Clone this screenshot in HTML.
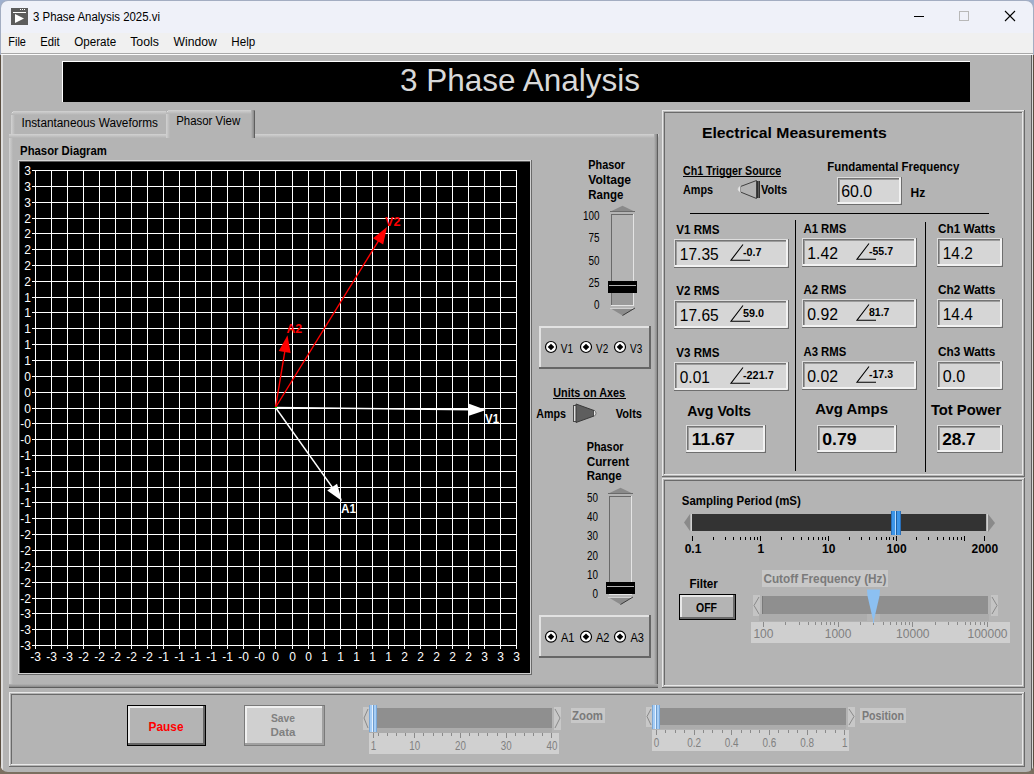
<!DOCTYPE html><html><head><meta charset="utf-8"><style>html,body{margin:0;padding:0;overflow:hidden;background:#7b6f60}svg{display:block}text{font-family:"Liberation Sans",sans-serif}</style></head><body>
<svg width="1034" height="774" viewBox="0 0 1034 774" shape-rendering="crispEdges">
<rect x="0" y="0" width="1034" height="774" fill="#7b6f60" />
<rect x="0" y="0" width="1034" height="12" fill="#9fb0cf" />
<rect x="0" y="0" width="1034" height="772" rx="8" ry="8" fill="#a3adc2" shape-rendering="geometricPrecision"/>
<rect x="1" y="1" width="1032" height="770" rx="7" ry="7" fill="#eff1f9" shape-rendering="geometricPrecision"/>
<rect x="1" y="33" width="1032" height="20" fill="#f0f0f0" />
<rect x="1" y="53" width="1032" height="1" fill="#a8a8a8" />
<rect x="1" y="54" width="1032" height="1" fill="#fcfcfc" />
<rect x="1" y="55" width="1032" height="717" fill="#b4b4b4" />
<rect x="0" y="55" width="1" height="717" fill="#5a4e40" />
<rect x="1" y="55" width="2" height="717" fill="#dedede" />
<rect x="1031" y="55" width="1" height="717" fill="#5e5e5e" />
<rect x="1032" y="55" width="1" height="717" fill="#d8d8d8" />
<rect x="1033" y="55" width="1" height="717" fill="#5a4e40" />
<rect x="0" y="772" width="1034" height="2" fill="#7b6f60" />
<path d="M0 764 A8 8 0 0 0 8 772 L0 772 Z" fill="#7b6f60" shape-rendering="geometricPrecision"/>
<path d="M1034 764 A8 8 0 0 1 1026 772 L1034 772 Z" fill="#7b6f60" shape-rendering="geometricPrecision"/>
<rect x="11" y="8" width="17" height="17" fill="#5c5c5c" />
<rect x="13" y="12" width="13" height="1" fill="#ffffff" />
<rect x="20" y="9" width="1" height="1" fill="#ffffff" />
<rect x="22" y="9" width="1" height="1" fill="#ffffff" />
<rect x="24" y="9" width="1" height="1" fill="#ffffff" />
<path d="M15 14 L15 23 L24 18.5 Z" fill="#ffffff" stroke="none" stroke-width="1" shape-rendering="geometricPrecision"/>
<text x="33" y="21" font-size="12.5" fill="#000" textLength="127" lengthAdjust="spacingAndGlyphs" >3 Phase Analysis 2025.vi</text>
<rect x="914" y="16" width="10" height="1" fill="#000" />
<rect x="959.5" y="11.5" width="9" height="9" rx="1" fill="none" stroke="#b8b8b8" stroke-width="1"/>
<path d="M1005 11 L1015 21 M1015 11 L1005 21" fill="none" stroke="#000" stroke-width="1.1" shape-rendering="geometricPrecision"/>
<text x="8.3" y="46" font-size="12.5" fill="#000" textLength="17.6" lengthAdjust="spacingAndGlyphs" >File</text>
<text x="40.2" y="46" font-size="12.5" fill="#000" textLength="19.4" lengthAdjust="spacingAndGlyphs" >Edit</text>
<text x="74.2" y="46" font-size="12.5" fill="#000" textLength="42.0" lengthAdjust="spacingAndGlyphs" >Operate</text>
<text x="130.2" y="46" font-size="12.5" fill="#000" textLength="28.7" lengthAdjust="spacingAndGlyphs" >Tools</text>
<text x="173.5" y="46" font-size="12.5" fill="#000" textLength="43.2" lengthAdjust="spacingAndGlyphs" >Window</text>
<text x="231.3" y="46" font-size="12.5" fill="#000" textLength="23.9" lengthAdjust="spacingAndGlyphs" >Help</text>
<rect x="62" y="61" width="908" height="1" fill="#ffffff" />
<rect x="62" y="61" width="1" height="41" fill="#ffffff" />
<rect x="63" y="62" width="907" height="40" fill="#000000" />
<text x="400" y="90.7" font-size="31.5" fill="#d9d9d9" textLength="240" lengthAdjust="spacingAndGlyphs" shape-rendering="geometricPrecision">3 Phase Analysis</text>
<defs>
<linearGradient id="gL" x1="0" x2="1" y1="0" y2="0"><stop offset="0" stop-color="#d2d2d2"/><stop offset="1" stop-color="#b4b4b4"/></linearGradient>
<linearGradient id="gT" x1="0" x2="0" y1="0" y2="1"><stop offset="0" stop-color="#d2d2d2"/><stop offset="1" stop-color="#b4b4b4"/></linearGradient>
<linearGradient id="gR" x1="0" x2="1" y1="0" y2="0"><stop offset="0" stop-color="#b4b4b4"/><stop offset="1" stop-color="#7a7a7a"/></linearGradient>
<linearGradient id="gB" x1="0" x2="0" y1="0" y2="1"><stop offset="0" stop-color="#b4b4b4"/><stop offset="1" stop-color="#7a7a7a"/></linearGradient>
</defs>
<rect x="11" y="111" width="156" height="24" fill="#b4b4b4" />
<rect x="11" y="111" width="4" height="24" fill="url(#gL)" />
<rect x="11" y="111" width="156" height="4" fill="url(#gT)" />
<rect x="11" y="111" width="2" height="2" fill="#b4b4b4" />
<rect x="12" y="112" width="1" height="1" fill="#e0e0e0" />
<text x="21.4" y="126.8" font-size="12.5" fill="#000" textLength="136.5" lengthAdjust="spacingAndGlyphs" >Instantaneous Waveforms</text>
<rect x="9" y="134" width="650" height="554" fill="#b4b4b4" />
<rect x="9" y="134" width="4" height="554" fill="url(#gL)" />
<rect x="9" y="134" width="650" height="4" fill="url(#gT)" />
<rect x="654" y="134" width="4" height="554" fill="url(#gR)" />
<rect x="657" y="134" width="1" height="554" fill="#5e5e5e" />
<rect x="9" y="684" width="649" height="4" fill="url(#gB)" />
<rect x="9" y="687" width="649" height="1" fill="#5e5e5e" />
<rect x="166" y="110" width="89" height="28" fill="#b4b4b4" />
<rect x="166" y="110" width="4" height="28" fill="url(#gL)" />
<rect x="166" y="110" width="89" height="4" fill="url(#gT)" />
<rect x="166" y="110" width="2" height="2" fill="#b4b4b4" />
<rect x="167" y="111" width="1" height="1" fill="#e0e0e0" />
<rect x="251" y="110" width="4" height="28" fill="url(#gR)" />
<rect x="254" y="111" width="1" height="27" fill="#5e5e5e" />
<text x="176.2" y="125" font-size="12.5" fill="#000" textLength="64" lengthAdjust="spacingAndGlyphs" >Phasor View</text>
<text x="20.1" y="154.8" font-size="12" fill="#000" font-weight="bold" textLength="86.8" lengthAdjust="spacingAndGlyphs" >Phasor Diagram</text>
<rect x="18" y="160" width="514" height="515" fill="#000" />
<rect x="18" y="160" width="514" height="1" fill="#d8d8d8" />
<rect x="18" y="160" width="1" height="515" fill="#d8d8d8" />
<rect x="19" y="161" width="512" height="1" fill="#5a5a5a" />
<rect x="19" y="161" width="1" height="513" fill="#5a5a5a" />
<rect x="530" y="161" width="1" height="513" fill="#d0d0d0" />
<rect x="19" y="673" width="512" height="1" fill="#d0d0d0" />
<rect x="531" y="160" width="1" height="515" fill="#6a6a6a" />
<rect x="18" y="674" width="514" height="1" fill="#6a6a6a" />
<g fill="#ffffff">
<rect x="35" y="170" width="1" height="479" fill="#ffffff" />
<rect x="51" y="170" width="1" height="479" fill="#ffffff" />
<rect x="67" y="170" width="1" height="479" fill="#ffffff" />
<rect x="83" y="170" width="1" height="479" fill="#ffffff" />
<rect x="99" y="170" width="1" height="479" fill="#ffffff" />
<rect x="115" y="170" width="1" height="479" fill="#ffffff" />
<rect x="131" y="170" width="1" height="479" fill="#ffffff" />
<rect x="147" y="170" width="1" height="479" fill="#ffffff" />
<rect x="163" y="170" width="1" height="479" fill="#ffffff" />
<rect x="179" y="170" width="1" height="479" fill="#ffffff" />
<rect x="195" y="170" width="1" height="479" fill="#ffffff" />
<rect x="211" y="170" width="1" height="479" fill="#ffffff" />
<rect x="227" y="170" width="1" height="479" fill="#ffffff" />
<rect x="243" y="170" width="1" height="479" fill="#ffffff" />
<rect x="259" y="170" width="1" height="479" fill="#ffffff" />
<rect x="275" y="170" width="1" height="479" fill="#ffffff" />
<rect x="292" y="170" width="1" height="479" fill="#ffffff" />
<rect x="308" y="170" width="1" height="479" fill="#ffffff" />
<rect x="324" y="170" width="1" height="479" fill="#ffffff" />
<rect x="340" y="170" width="1" height="479" fill="#ffffff" />
<rect x="356" y="170" width="1" height="479" fill="#ffffff" />
<rect x="372" y="170" width="1" height="479" fill="#ffffff" />
<rect x="388" y="170" width="1" height="479" fill="#ffffff" />
<rect x="404" y="170" width="1" height="479" fill="#ffffff" />
<rect x="420" y="170" width="1" height="479" fill="#ffffff" />
<rect x="436" y="170" width="1" height="479" fill="#ffffff" />
<rect x="452" y="170" width="1" height="479" fill="#ffffff" />
<rect x="468" y="170" width="1" height="479" fill="#ffffff" />
<rect x="484" y="170" width="1" height="479" fill="#ffffff" />
<rect x="500" y="170" width="1" height="479" fill="#ffffff" />
<rect x="516" y="170" width="1" height="479" fill="#ffffff" />
<rect x="32" y="170" width="485" height="1" fill="#ffffff" />
<rect x="32" y="186" width="485" height="1" fill="#ffffff" />
<rect x="32" y="202" width="485" height="1" fill="#ffffff" />
<rect x="32" y="218" width="485" height="1" fill="#ffffff" />
<rect x="32" y="233" width="485" height="1" fill="#ffffff" />
<rect x="32" y="249" width="485" height="1" fill="#ffffff" />
<rect x="32" y="265" width="485" height="1" fill="#ffffff" />
<rect x="32" y="281" width="485" height="1" fill="#ffffff" />
<rect x="32" y="297" width="485" height="1" fill="#ffffff" />
<rect x="32" y="312" width="485" height="1" fill="#ffffff" />
<rect x="32" y="328" width="485" height="1" fill="#ffffff" />
<rect x="32" y="344" width="485" height="1" fill="#ffffff" />
<rect x="32" y="360" width="485" height="1" fill="#ffffff" />
<rect x="32" y="376" width="485" height="1" fill="#ffffff" />
<rect x="32" y="392" width="485" height="1" fill="#ffffff" />
<rect x="32" y="408" width="485" height="1" fill="#ffffff" />
<rect x="32" y="423" width="485" height="1" fill="#ffffff" />
<rect x="32" y="439" width="485" height="1" fill="#ffffff" />
<rect x="32" y="455" width="485" height="1" fill="#ffffff" />
<rect x="32" y="471" width="485" height="1" fill="#ffffff" />
<rect x="32" y="487" width="485" height="1" fill="#ffffff" />
<rect x="32" y="502" width="485" height="1" fill="#ffffff" />
<rect x="32" y="518" width="485" height="1" fill="#ffffff" />
<rect x="32" y="534" width="485" height="1" fill="#ffffff" />
<rect x="32" y="550" width="485" height="1" fill="#ffffff" />
<rect x="32" y="566" width="485" height="1" fill="#ffffff" />
<rect x="32" y="582" width="485" height="1" fill="#ffffff" />
<rect x="32" y="598" width="485" height="1" fill="#ffffff" />
<rect x="32" y="613" width="485" height="1" fill="#ffffff" />
<rect x="32" y="629" width="485" height="1" fill="#ffffff" />
<rect x="32" y="645" width="485" height="1" fill="#ffffff" />
</g>
<g font-size="12" fill="#ffffff">
<text x="35.5" y="660.5" text-anchor="middle">-3</text>
<text x="51.5" y="660.5" text-anchor="middle">-3</text>
<text x="67.5" y="660.5" text-anchor="middle">-3</text>
<text x="83.5" y="660.5" text-anchor="middle">-2</text>
<text x="99.5" y="660.5" text-anchor="middle">-2</text>
<text x="115.5" y="660.5" text-anchor="middle">-2</text>
<text x="131.5" y="660.5" text-anchor="middle">-2</text>
<text x="147.5" y="660.5" text-anchor="middle">-2</text>
<text x="163.5" y="660.5" text-anchor="middle">-1</text>
<text x="179.5" y="660.5" text-anchor="middle">-1</text>
<text x="195.5" y="660.5" text-anchor="middle">-1</text>
<text x="211.5" y="660.5" text-anchor="middle">-1</text>
<text x="227.5" y="660.5" text-anchor="middle">-1</text>
<text x="243.5" y="660.5" text-anchor="middle">-0</text>
<text x="259.5" y="660.5" text-anchor="middle">-0</text>
<text x="275.5" y="660.5" text-anchor="middle">0</text>
<text x="292.5" y="660.5" text-anchor="middle">0</text>
<text x="308.5" y="660.5" text-anchor="middle">0</text>
<text x="324.5" y="660.5" text-anchor="middle">1</text>
<text x="340.5" y="660.5" text-anchor="middle">1</text>
<text x="356.5" y="660.5" text-anchor="middle">1</text>
<text x="372.5" y="660.5" text-anchor="middle">1</text>
<text x="388.5" y="660.5" text-anchor="middle">1</text>
<text x="404.5" y="660.5" text-anchor="middle">2</text>
<text x="420.5" y="660.5" text-anchor="middle">2</text>
<text x="436.5" y="660.5" text-anchor="middle">2</text>
<text x="452.5" y="660.5" text-anchor="middle">2</text>
<text x="468.5" y="660.5" text-anchor="middle">2</text>
<text x="484.5" y="660.5" text-anchor="middle">3</text>
<text x="500.5" y="660.5" text-anchor="middle">3</text>
<text x="516.5" y="660.5" text-anchor="middle">3</text>
<text x="31" y="174.8" text-anchor="end">3</text>
<text x="31" y="190.8" text-anchor="end">3</text>
<text x="31" y="206.8" text-anchor="end">3</text>
<text x="31" y="222.8" text-anchor="end">2</text>
<text x="31" y="237.8" text-anchor="end">2</text>
<text x="31" y="253.8" text-anchor="end">2</text>
<text x="31" y="269.8" text-anchor="end">2</text>
<text x="31" y="285.8" text-anchor="end">2</text>
<text x="31" y="301.8" text-anchor="end">1</text>
<text x="31" y="316.8" text-anchor="end">1</text>
<text x="31" y="332.8" text-anchor="end">1</text>
<text x="31" y="348.8" text-anchor="end">1</text>
<text x="31" y="364.8" text-anchor="end">1</text>
<text x="31" y="380.8" text-anchor="end">0</text>
<text x="31" y="396.8" text-anchor="end">0</text>
<text x="31" y="412.8" text-anchor="end">0</text>
<text x="31" y="427.8" text-anchor="end">-0</text>
<text x="31" y="443.8" text-anchor="end">-0</text>
<text x="31" y="459.8" text-anchor="end">-1</text>
<text x="31" y="475.8" text-anchor="end">-1</text>
<text x="31" y="491.8" text-anchor="end">-1</text>
<text x="31" y="506.8" text-anchor="end">-1</text>
<text x="31" y="522.8" text-anchor="end">-1</text>
<text x="31" y="538.8" text-anchor="end">-2</text>
<text x="31" y="554.8" text-anchor="end">-2</text>
<text x="31" y="570.8" text-anchor="end">-2</text>
<text x="31" y="586.8" text-anchor="end">-2</text>
<text x="31" y="602.8" text-anchor="end">-2</text>
<text x="31" y="617.8" text-anchor="end">-3</text>
<text x="31" y="633.8" text-anchor="end">-3</text>
<text x="31" y="649.8" text-anchor="end">-3</text>
</g>
<line x1="275.5" y1="407.5" x2="471.00" y2="409.82" stroke="#ffffff" stroke-width="1.4" shape-rendering="geometricPrecision"/>
<path d="M486.00 410.00 L468.93 415.80 L469.07 403.80 Z" fill="#ffffff" shape-rendering="geometricPrecision"/>
<line x1="275.5" y1="407.5" x2="333.31" y2="488.78" stroke="#ffffff" stroke-width="1.4" shape-rendering="geometricPrecision"/>
<path d="M342.00 501.00 L327.26 490.62 L337.04 483.67 Z" fill="#ffffff" shape-rendering="geometricPrecision"/>
<line x1="275.5" y1="407.5" x2="379.12" y2="239.76" stroke="#ff0000" stroke-width="1.4" shape-rendering="geometricPrecision"/>
<path d="M387.00 227.00 L383.17 244.62 L372.96 238.31 Z" fill="#ff0000" shape-rendering="geometricPrecision"/>
<line x1="275.5" y1="407.5" x2="285.04" y2="350.10" stroke="#ff0000" stroke-width="1.4" shape-rendering="geometricPrecision"/>
<path d="M287.50 335.30 L290.63 353.05 L278.79 351.09 Z" fill="#ff0000" shape-rendering="geometricPrecision"/>
<rect x="275" y="407" width="2" height="1" fill="#00ff00" />
<text x="485" y="423" font-size="13" fill="#ffffff" font-weight="bold" textLength="14" lengthAdjust="spacingAndGlyphs" >V1</text>
<text x="341" y="513" font-size="13" fill="#ffffff" font-weight="bold" textLength="15" lengthAdjust="spacingAndGlyphs" >A1</text>
<text x="385" y="225.6" font-size="13" fill="#ff0000" font-weight="bold" textLength="15.5" lengthAdjust="spacingAndGlyphs" >V2</text>
<text x="286.4" y="333.3" font-size="13" fill="#ff0000" font-weight="bold" textLength="15.7" lengthAdjust="spacingAndGlyphs" >A2</text>
<text x="588.3" y="168.6" font-size="12" fill="#000" font-weight="bold" textLength="36.8" lengthAdjust="spacingAndGlyphs" >Phasor</text>
<text x="588.3" y="183.6" font-size="12" fill="#000" font-weight="bold" textLength="42.8" lengthAdjust="spacingAndGlyphs" >Voltage</text>
<text x="588.3" y="198.6" font-size="12" fill="#000" font-weight="bold" textLength="35" lengthAdjust="spacingAndGlyphs" >Range</text>
<path d="M610 211.7 L622.5 205.7 L635 211.7 Z" fill="#8a8a8a" stroke="none" stroke-width="1" shape-rendering="geometricPrecision"/>
<rect x="610" y="210.7" width="25" height="1" fill="#6a6a6a" />
<rect x="611" y="214" width="23" height="92" fill="#b4b4b4" />
<rect x="611" y="214" width="1" height="92" fill="#6a6a6a" />
<rect x="611" y="214" width="22" height="1" fill="#6a6a6a" />
<rect x="633" y="214" width="1" height="92" fill="#e4e4e4" />
<rect x="611" y="305" width="23" height="1" fill="#e4e4e4" />
<rect x="612" y="292" width="21" height="13" fill="#9a9a9a" />
<rect x="608" y="281" width="29" height="12" fill="#000" />
<rect x="609" y="285" width="27" height="1" fill="#b0b0b0" />
<path d="M610 308 L635 308 L622.5 315.5 Z" fill="#8c8c8c" stroke="none" stroke-width="1" shape-rendering="geometricPrecision"/>
<rect x="610" y="308" width="25" height="1" fill="#d0d0d0" />
<path d="M635 308 L622.5 315.5" fill="none" stroke="#3a3a3a" stroke-width="1" shape-rendering="geometricPrecision"/>
<text x="599.5" y="220.0" font-size="12.3" fill="#000" textLength="16.5" lengthAdjust="spacingAndGlyphs" text-anchor="end" >100</text>
<text x="599.5" y="242.3" font-size="12.3" fill="#000" textLength="11.0" lengthAdjust="spacingAndGlyphs" text-anchor="end" >75</text>
<text x="599.5" y="264.6" font-size="12.3" fill="#000" textLength="11.0" lengthAdjust="spacingAndGlyphs" text-anchor="end" >50</text>
<text x="599.5" y="286.9" font-size="12.3" fill="#000" textLength="11.0" lengthAdjust="spacingAndGlyphs" text-anchor="end" >25</text>
<text x="599.5" y="309.2" font-size="12.3" fill="#000" textLength="5.5" lengthAdjust="spacingAndGlyphs" text-anchor="end" >0</text>
<text x="586.7" y="450.6" font-size="12" fill="#000" font-weight="bold" textLength="36.8" lengthAdjust="spacingAndGlyphs" >Phasor</text>
<text x="586.7" y="465.5" font-size="12" fill="#000" font-weight="bold" textLength="42.5" lengthAdjust="spacingAndGlyphs" >Current</text>
<text x="586.7" y="480.4" font-size="12" fill="#000" font-weight="bold" textLength="35" lengthAdjust="spacingAndGlyphs" >Range</text>
<path d="M608 493.8 L620.5 487.8 L633 493.8 Z" fill="#8a8a8a" stroke="none" stroke-width="1" shape-rendering="geometricPrecision"/>
<rect x="608" y="492.8" width="25" height="1" fill="#6a6a6a" />
<rect x="609" y="496" width="23" height="99" fill="#b4b4b4" />
<rect x="609" y="496" width="1" height="99" fill="#6a6a6a" />
<rect x="609" y="496" width="22" height="1" fill="#6a6a6a" />
<rect x="631" y="496" width="1" height="99" fill="#e4e4e4" />
<rect x="609" y="594" width="23" height="1" fill="#e4e4e4" />
<rect x="610" y="593" width="21" height="1" fill="#9a9a9a" />
<rect x="606" y="582" width="29" height="12" fill="#000" />
<rect x="607" y="586" width="27" height="1" fill="#b0b0b0" />
<path d="M608 597 L633 597 L620.5 604.5 Z" fill="#8c8c8c" stroke="none" stroke-width="1" shape-rendering="geometricPrecision"/>
<rect x="608" y="597" width="25" height="1" fill="#d0d0d0" />
<path d="M633 597 L620.5 604.5" fill="none" stroke="#3a3a3a" stroke-width="1" shape-rendering="geometricPrecision"/>
<text x="598" y="502.0" font-size="12.3" fill="#000" textLength="11.0" lengthAdjust="spacingAndGlyphs" text-anchor="end" >50</text>
<text x="598" y="521.2" font-size="12.3" fill="#000" textLength="11.0" lengthAdjust="spacingAndGlyphs" text-anchor="end" >40</text>
<text x="598" y="540.4" font-size="12.3" fill="#000" textLength="11.0" lengthAdjust="spacingAndGlyphs" text-anchor="end" >30</text>
<text x="598" y="559.6" font-size="12.3" fill="#000" textLength="11.0" lengthAdjust="spacingAndGlyphs" text-anchor="end" >20</text>
<text x="598" y="578.8" font-size="12.3" fill="#000" textLength="11.0" lengthAdjust="spacingAndGlyphs" text-anchor="end" >10</text>
<text x="598" y="598.0" font-size="12.3" fill="#000" textLength="5.5" lengthAdjust="spacingAndGlyphs" text-anchor="end" >0</text>
<rect x="539" y="326" width="112" height="43" fill="#b4b4b4" />
<rect x="539" y="326" width="112" height="2" fill="#e2e2e2" />
<rect x="539" y="326" width="2" height="43" fill="#e2e2e2" />
<rect x="539" y="367" width="112" height="2" fill="#666666" />
<rect x="649" y="326" width="2" height="43" fill="#666666" />
<circle cx="551" cy="347" r="5.5" fill="#fff" stroke="#000" stroke-width="1.2" shape-rendering="geometricPrecision"/>
<path d="M551 343.7 L554.3 347 L551 350.3 L547.7 347 Z" fill="#000" shape-rendering="geometricPrecision"/>
<text x="560.8" y="352.9" font-size="12.5" fill="#000" textLength="12.2" lengthAdjust="spacingAndGlyphs" >V1</text>
<circle cx="586" cy="347" r="5.5" fill="#fff" stroke="#000" stroke-width="1.2" shape-rendering="geometricPrecision"/>
<path d="M586 343.7 L589.3 347 L586 350.3 L582.7 347 Z" fill="#000" shape-rendering="geometricPrecision"/>
<text x="596" y="352.9" font-size="12.5" fill="#000" textLength="12.2" lengthAdjust="spacingAndGlyphs" >V2</text>
<circle cx="620" cy="347" r="5.5" fill="#fff" stroke="#000" stroke-width="1.2" shape-rendering="geometricPrecision"/>
<path d="M620 343.7 L623.3 347 L620 350.3 L616.7 347 Z" fill="#000" shape-rendering="geometricPrecision"/>
<text x="630" y="352.9" font-size="12.5" fill="#000" textLength="12.2" lengthAdjust="spacingAndGlyphs" >V3</text>
<rect x="539" y="615" width="112" height="43" fill="#b4b4b4" />
<rect x="539" y="615" width="112" height="2" fill="#e2e2e2" />
<rect x="539" y="615" width="2" height="43" fill="#e2e2e2" />
<rect x="539" y="656" width="112" height="2" fill="#666666" />
<rect x="649" y="615" width="2" height="43" fill="#666666" />
<circle cx="551" cy="636.7" r="5.5" fill="#fff" stroke="#000" stroke-width="1.2" shape-rendering="geometricPrecision"/>
<path d="M551 633.4000000000001 L554.3 636.7 L551 640.0 L547.7 636.7 Z" fill="#000" shape-rendering="geometricPrecision"/>
<text x="561" y="642" font-size="12.5" fill="#000" textLength="13.5" lengthAdjust="spacingAndGlyphs" >A1</text>
<circle cx="586" cy="636.7" r="5.5" fill="#fff" stroke="#000" stroke-width="1.2" shape-rendering="geometricPrecision"/>
<path d="M586 633.4000000000001 L589.3 636.7 L586 640.0 L582.7 636.7 Z" fill="#000" shape-rendering="geometricPrecision"/>
<text x="596" y="642" font-size="12.5" fill="#000" textLength="13.5" lengthAdjust="spacingAndGlyphs" >A2</text>
<circle cx="620" cy="636.7" r="5.5" fill="#fff" stroke="#000" stroke-width="1.2" shape-rendering="geometricPrecision"/>
<path d="M620 633.4000000000001 L623.3 636.7 L620 640.0 L616.7 636.7 Z" fill="#000" shape-rendering="geometricPrecision"/>
<text x="630.5" y="642" font-size="12.5" fill="#000" textLength="13.5" lengthAdjust="spacingAndGlyphs" >A3</text>
<text x="553.3" y="396.5" font-size="12" fill="#000" font-weight="bold" textLength="71.7" lengthAdjust="spacingAndGlyphs" >Units on Axes</text>
<rect x="553" y="398" width="73" height="1" fill="#000" />
<text x="536.3" y="418" font-size="12" fill="#000" font-weight="bold" textLength="29.7" lengthAdjust="spacingAndGlyphs" >Amps</text>
<text x="615.8" y="418" font-size="12" fill="#000" font-weight="bold" textLength="26.2" lengthAdjust="spacingAndGlyphs" >Volts</text>
<rect x="573" y="405" width="3" height="17" fill="#e0e0e0" />
<rect x="573.5" y="405.5" width="2.5" height="16" fill="none" stroke="#4a4a4a" stroke-width="1"/>
<path d="M576 404 L594 410.5 L594 416 L576 422.5 Z" fill="#5e5e5e" stroke="#3a3a3a" stroke-width="1" shape-rendering="geometricPrecision"/>
<path d="M594 410 Q598 413.2 594 416.5" fill="#e8e8e8" stroke="#5a5a5a" stroke-width="0.8" shape-rendering="geometricPrecision"/>
<rect x="662" y="110" width="362" height="1" fill="#e8e8e8" />
<rect x="662" y="110" width="1" height="366" fill="#e8e8e8" />
<rect x="662" y="476" width="363" height="1" fill="#6a6a6a" />
<rect x="1024" y="110" width="1" height="367" fill="#6a6a6a" />
<rect x="664" y="112" width="358" height="1" fill="#6a6a6a" />
<rect x="664" y="112" width="1" height="362" fill="#6a6a6a" />
<rect x="664" y="474" width="359" height="1" fill="#e8e8e8" />
<rect x="1022" y="112" width="1" height="363" fill="#e8e8e8" />
<text x="701.9" y="137.8" font-size="15" fill="#000" font-weight="bold" textLength="184.8" lengthAdjust="spacingAndGlyphs" >Electrical Measurements</text>
<text x="683" y="175.2" font-size="12" fill="#000" font-weight="bold" textLength="98.2" lengthAdjust="spacingAndGlyphs" >Ch1 Trigger Source</text>
<rect x="683" y="176" width="98" height="1" fill="#000" />
<text x="683" y="194.3" font-size="12" fill="#000" font-weight="bold" textLength="30" lengthAdjust="spacingAndGlyphs" >Amps</text>
<text x="761" y="194.3" font-size="12" fill="#000" font-weight="bold" textLength="26" lengthAdjust="spacingAndGlyphs" >Volts</text>
<path d="M740.5 186.5 L756.5 180.5 L756.5 198.5 L740.5 192 Z" fill="#b4b4b4" stroke="#404040" stroke-width="1" shape-rendering="geometricPrecision"/>
<path d="M740.5 186 Q735.5 189.2 740.5 192.5" fill="#e8e8e8" stroke="#d8d8d8" stroke-width="0.8" shape-rendering="geometricPrecision"/>
<rect x="757" y="181" width="3" height="17" fill="#5a5a5a" />
<rect x="757" y="181" width="1" height="17" fill="#303030" />
<rect x="759" y="181" width="1" height="17" fill="#303030" />
<text x="827.3" y="170.7" font-size="12" fill="#000" font-weight="bold" textLength="132" lengthAdjust="spacingAndGlyphs" >Fundamental Frequency</text>
<rect x="837" y="177" width="65" height="28" fill="#d6d6d6" />
<rect x="837" y="177" width="64" height="1" fill="#dedede" />
<rect x="837" y="177" width="1" height="27" fill="#dedede" />
<rect x="838" y="178" width="62" height="2" fill="#9c9c9c" />
<rect x="838" y="178" width="2" height="25" fill="#9c9c9c" />
<rect x="838" y="178" width="62" height="1" fill="#747474" />
<rect x="838" y="178" width="1" height="25" fill="#747474" />
<rect x="838" y="202" width="62" height="2" fill="#f2f2f2" />
<rect x="899" y="178" width="2" height="25" fill="#f2f2f2" />
<rect x="837" y="204" width="65" height="1" fill="#6e6e6e" />
<rect x="901" y="177" width="1" height="28" fill="#6e6e6e" />
<text x="841.2" y="197" font-size="17" fill="#000" textLength="31" lengthAdjust="spacingAndGlyphs" >60.0</text>
<text x="910.5" y="197" font-size="12.5" fill="#000" font-weight="bold" textLength="14.7" lengthAdjust="spacingAndGlyphs" >Hz</text>
<rect x="690" y="213" width="299" height="1" fill="#000" />
<rect x="795" y="220" width="1" height="251" fill="#000" />
<rect x="925" y="222" width="1" height="250" fill="#000" />
<text x="676.3" y="234.4" font-size="12.8" fill="#000" font-weight="bold" textLength="43.2" lengthAdjust="spacingAndGlyphs" >V1 RMS</text>
<rect x="674" y="239" width="115" height="29" fill="#d6d6d6" />
<rect x="674" y="239" width="114" height="1" fill="#dedede" />
<rect x="674" y="239" width="1" height="28" fill="#dedede" />
<rect x="675" y="240" width="112" height="2" fill="#9c9c9c" />
<rect x="675" y="240" width="2" height="26" fill="#9c9c9c" />
<rect x="675" y="240" width="112" height="1" fill="#747474" />
<rect x="675" y="240" width="1" height="26" fill="#747474" />
<rect x="675" y="265" width="112" height="2" fill="#f2f2f2" />
<rect x="786" y="240" width="2" height="26" fill="#f2f2f2" />
<rect x="674" y="267" width="115" height="1" fill="#6e6e6e" />
<rect x="788" y="239" width="1" height="29" fill="#6e6e6e" />
<text x="679.8" y="260" font-size="17" fill="#000" textLength="38.9" lengthAdjust="spacingAndGlyphs" >17.35</text>
<path d="M750 260.2 L731 260.2 L743 244.5" fill="none" stroke="#000" stroke-width="1.1" shape-rendering="geometricPrecision"/>
<text x="743" y="255.5" font-size="11" fill="#000" font-weight="bold" textLength="18.5" lengthAdjust="spacingAndGlyphs" >-0.7</text>
<text x="803.5" y="232.6" font-size="12.8" fill="#000" font-weight="bold" textLength="42.8" lengthAdjust="spacingAndGlyphs" >A1 RMS</text>
<rect x="802" y="238" width="115" height="29" fill="#d6d6d6" />
<rect x="802" y="238" width="114" height="1" fill="#dedede" />
<rect x="802" y="238" width="1" height="28" fill="#dedede" />
<rect x="803" y="239" width="112" height="2" fill="#9c9c9c" />
<rect x="803" y="239" width="2" height="26" fill="#9c9c9c" />
<rect x="803" y="239" width="112" height="1" fill="#747474" />
<rect x="803" y="239" width="1" height="26" fill="#747474" />
<rect x="803" y="264" width="112" height="2" fill="#f2f2f2" />
<rect x="914" y="239" width="2" height="26" fill="#f2f2f2" />
<rect x="802" y="266" width="115" height="1" fill="#6e6e6e" />
<rect x="916" y="238" width="1" height="29" fill="#6e6e6e" />
<text x="807.3" y="259" font-size="17" fill="#000" textLength="30.7" lengthAdjust="spacingAndGlyphs" >1.42</text>
<path d="M876 259.2 L857 259.2 L869 243.5" fill="none" stroke="#000" stroke-width="1.1" shape-rendering="geometricPrecision"/>
<text x="869" y="254.5" font-size="11" fill="#000" font-weight="bold" textLength="24" lengthAdjust="spacingAndGlyphs" >-55.7</text>
<text x="938" y="233.4" font-size="12.8" fill="#000" font-weight="bold" textLength="57.2" lengthAdjust="spacingAndGlyphs" >Ch1 Watts</text>
<rect x="937" y="238" width="66" height="29" fill="#d6d6d6" />
<rect x="937" y="238" width="65" height="1" fill="#dedede" />
<rect x="937" y="238" width="1" height="28" fill="#dedede" />
<rect x="938" y="239" width="63" height="2" fill="#9c9c9c" />
<rect x="938" y="239" width="2" height="26" fill="#9c9c9c" />
<rect x="938" y="239" width="63" height="1" fill="#747474" />
<rect x="938" y="239" width="1" height="26" fill="#747474" />
<rect x="938" y="264" width="63" height="2" fill="#f2f2f2" />
<rect x="1000" y="239" width="2" height="26" fill="#f2f2f2" />
<rect x="937" y="266" width="66" height="1" fill="#6e6e6e" />
<rect x="1002" y="238" width="1" height="29" fill="#6e6e6e" />
<text x="942.8" y="259" font-size="17" fill="#000" textLength="30" lengthAdjust="spacingAndGlyphs" >14.2</text>
<text x="676.3" y="295.4" font-size="12.8" fill="#000" font-weight="bold" textLength="43.2" lengthAdjust="spacingAndGlyphs" >V2 RMS</text>
<rect x="674" y="300" width="115" height="29" fill="#d6d6d6" />
<rect x="674" y="300" width="114" height="1" fill="#dedede" />
<rect x="674" y="300" width="1" height="28" fill="#dedede" />
<rect x="675" y="301" width="112" height="2" fill="#9c9c9c" />
<rect x="675" y="301" width="2" height="26" fill="#9c9c9c" />
<rect x="675" y="301" width="112" height="1" fill="#747474" />
<rect x="675" y="301" width="1" height="26" fill="#747474" />
<rect x="675" y="326" width="112" height="2" fill="#f2f2f2" />
<rect x="786" y="301" width="2" height="26" fill="#f2f2f2" />
<rect x="674" y="328" width="115" height="1" fill="#6e6e6e" />
<rect x="788" y="300" width="1" height="29" fill="#6e6e6e" />
<text x="679.8" y="321" font-size="17" fill="#000" textLength="38.9" lengthAdjust="spacingAndGlyphs" >17.65</text>
<path d="M750 321.2 L731 321.2 L743 305.5" fill="none" stroke="#000" stroke-width="1.1" shape-rendering="geometricPrecision"/>
<text x="743" y="316.5" font-size="11" fill="#000" font-weight="bold" textLength="21" lengthAdjust="spacingAndGlyphs" >59.0</text>
<text x="803.5" y="293.6" font-size="12.8" fill="#000" font-weight="bold" textLength="42.8" lengthAdjust="spacingAndGlyphs" >A2 RMS</text>
<rect x="802" y="299" width="115" height="29" fill="#d6d6d6" />
<rect x="802" y="299" width="114" height="1" fill="#dedede" />
<rect x="802" y="299" width="1" height="28" fill="#dedede" />
<rect x="803" y="300" width="112" height="2" fill="#9c9c9c" />
<rect x="803" y="300" width="2" height="26" fill="#9c9c9c" />
<rect x="803" y="300" width="112" height="1" fill="#747474" />
<rect x="803" y="300" width="1" height="26" fill="#747474" />
<rect x="803" y="325" width="112" height="2" fill="#f2f2f2" />
<rect x="914" y="300" width="2" height="26" fill="#f2f2f2" />
<rect x="802" y="327" width="115" height="1" fill="#6e6e6e" />
<rect x="916" y="299" width="1" height="29" fill="#6e6e6e" />
<text x="807.3" y="320" font-size="17" fill="#000" textLength="30.7" lengthAdjust="spacingAndGlyphs" >0.92</text>
<path d="M876 320.2 L857 320.2 L869 304.5" fill="none" stroke="#000" stroke-width="1.1" shape-rendering="geometricPrecision"/>
<text x="869" y="315.5" font-size="11" fill="#000" font-weight="bold" textLength="20.4" lengthAdjust="spacingAndGlyphs" >81.7</text>
<text x="938" y="294.4" font-size="12.8" fill="#000" font-weight="bold" textLength="57.2" lengthAdjust="spacingAndGlyphs" >Ch2 Watts</text>
<rect x="937" y="299" width="66" height="29" fill="#d6d6d6" />
<rect x="937" y="299" width="65" height="1" fill="#dedede" />
<rect x="937" y="299" width="1" height="28" fill="#dedede" />
<rect x="938" y="300" width="63" height="2" fill="#9c9c9c" />
<rect x="938" y="300" width="2" height="26" fill="#9c9c9c" />
<rect x="938" y="300" width="63" height="1" fill="#747474" />
<rect x="938" y="300" width="1" height="26" fill="#747474" />
<rect x="938" y="325" width="63" height="2" fill="#f2f2f2" />
<rect x="1000" y="300" width="2" height="26" fill="#f2f2f2" />
<rect x="937" y="327" width="66" height="1" fill="#6e6e6e" />
<rect x="1002" y="299" width="1" height="29" fill="#6e6e6e" />
<text x="942.8" y="320" font-size="17" fill="#000" textLength="30" lengthAdjust="spacingAndGlyphs" >14.4</text>
<text x="676.3" y="357.4" font-size="12.8" fill="#000" font-weight="bold" textLength="43.2" lengthAdjust="spacingAndGlyphs" >V3 RMS</text>
<rect x="674" y="362" width="115" height="29" fill="#d6d6d6" />
<rect x="674" y="362" width="114" height="1" fill="#dedede" />
<rect x="674" y="362" width="1" height="28" fill="#dedede" />
<rect x="675" y="363" width="112" height="2" fill="#9c9c9c" />
<rect x="675" y="363" width="2" height="26" fill="#9c9c9c" />
<rect x="675" y="363" width="112" height="1" fill="#747474" />
<rect x="675" y="363" width="1" height="26" fill="#747474" />
<rect x="675" y="388" width="112" height="2" fill="#f2f2f2" />
<rect x="786" y="363" width="2" height="26" fill="#f2f2f2" />
<rect x="674" y="390" width="115" height="1" fill="#6e6e6e" />
<rect x="788" y="362" width="1" height="29" fill="#6e6e6e" />
<text x="679.8" y="383" font-size="17" fill="#000" textLength="30" lengthAdjust="spacingAndGlyphs" >0.01</text>
<path d="M750 383.2 L731 383.2 L743 367.5" fill="none" stroke="#000" stroke-width="1.1" shape-rendering="geometricPrecision"/>
<text x="743" y="378.5" font-size="11" fill="#000" font-weight="bold" textLength="30.7" lengthAdjust="spacingAndGlyphs" >-221.7</text>
<text x="803.5" y="355.6" font-size="12.8" fill="#000" font-weight="bold" textLength="42.8" lengthAdjust="spacingAndGlyphs" >A3 RMS</text>
<rect x="802" y="361" width="115" height="29" fill="#d6d6d6" />
<rect x="802" y="361" width="114" height="1" fill="#dedede" />
<rect x="802" y="361" width="1" height="28" fill="#dedede" />
<rect x="803" y="362" width="112" height="2" fill="#9c9c9c" />
<rect x="803" y="362" width="2" height="26" fill="#9c9c9c" />
<rect x="803" y="362" width="112" height="1" fill="#747474" />
<rect x="803" y="362" width="1" height="26" fill="#747474" />
<rect x="803" y="387" width="112" height="2" fill="#f2f2f2" />
<rect x="914" y="362" width="2" height="26" fill="#f2f2f2" />
<rect x="802" y="389" width="115" height="1" fill="#6e6e6e" />
<rect x="916" y="361" width="1" height="29" fill="#6e6e6e" />
<text x="807.3" y="382" font-size="17" fill="#000" textLength="30.7" lengthAdjust="spacingAndGlyphs" >0.02</text>
<path d="M876 382.2 L857 382.2 L869 366.5" fill="none" stroke="#000" stroke-width="1.1" shape-rendering="geometricPrecision"/>
<text x="869" y="377.5" font-size="11" fill="#000" font-weight="bold" textLength="24" lengthAdjust="spacingAndGlyphs" >-17.3</text>
<text x="938" y="356.4" font-size="12.8" fill="#000" font-weight="bold" textLength="57.2" lengthAdjust="spacingAndGlyphs" >Ch3 Watts</text>
<rect x="937" y="361" width="66" height="29" fill="#d6d6d6" />
<rect x="937" y="361" width="65" height="1" fill="#dedede" />
<rect x="937" y="361" width="1" height="28" fill="#dedede" />
<rect x="938" y="362" width="63" height="2" fill="#9c9c9c" />
<rect x="938" y="362" width="2" height="26" fill="#9c9c9c" />
<rect x="938" y="362" width="63" height="1" fill="#747474" />
<rect x="938" y="362" width="1" height="26" fill="#747474" />
<rect x="938" y="387" width="63" height="2" fill="#f2f2f2" />
<rect x="1000" y="362" width="2" height="26" fill="#f2f2f2" />
<rect x="937" y="389" width="66" height="1" fill="#6e6e6e" />
<rect x="1002" y="361" width="1" height="29" fill="#6e6e6e" />
<text x="942.8" y="382" font-size="17" fill="#000" textLength="22.3" lengthAdjust="spacingAndGlyphs" >0.0</text>
<text x="687.3" y="416" font-size="14" fill="#000" font-weight="bold" textLength="63.7" lengthAdjust="spacingAndGlyphs" >Avg Volts</text>
<rect x="686" y="425" width="80" height="28" fill="#d6d6d6" />
<rect x="686" y="425" width="79" height="1" fill="#dedede" />
<rect x="686" y="425" width="1" height="27" fill="#dedede" />
<rect x="687" y="426" width="77" height="2" fill="#9c9c9c" />
<rect x="687" y="426" width="2" height="25" fill="#9c9c9c" />
<rect x="687" y="426" width="77" height="1" fill="#747474" />
<rect x="687" y="426" width="1" height="25" fill="#747474" />
<rect x="687" y="450" width="77" height="2" fill="#f2f2f2" />
<rect x="763" y="426" width="2" height="25" fill="#f2f2f2" />
<rect x="686" y="452" width="80" height="1" fill="#6e6e6e" />
<rect x="765" y="425" width="1" height="28" fill="#6e6e6e" />
<text x="691.8" y="445" font-size="17" fill="#000" font-weight="bold" textLength="43.1" lengthAdjust="spacingAndGlyphs" >11.67</text>
<text x="815.3" y="413.5" font-size="14" fill="#000" font-weight="bold" textLength="72.7" lengthAdjust="spacingAndGlyphs" >Avg Amps</text>
<rect x="817" y="425" width="80" height="28" fill="#d6d6d6" />
<rect x="817" y="425" width="79" height="1" fill="#dedede" />
<rect x="817" y="425" width="1" height="27" fill="#dedede" />
<rect x="818" y="426" width="77" height="2" fill="#9c9c9c" />
<rect x="818" y="426" width="2" height="25" fill="#9c9c9c" />
<rect x="818" y="426" width="77" height="1" fill="#747474" />
<rect x="818" y="426" width="1" height="25" fill="#747474" />
<rect x="818" y="450" width="77" height="2" fill="#f2f2f2" />
<rect x="894" y="426" width="2" height="25" fill="#f2f2f2" />
<rect x="817" y="452" width="80" height="1" fill="#6e6e6e" />
<rect x="896" y="425" width="1" height="28" fill="#6e6e6e" />
<text x="822.3" y="444.5" font-size="17" fill="#000" font-weight="bold" textLength="34.4" lengthAdjust="spacingAndGlyphs" >0.79</text>
<text x="930.9" y="415.1" font-size="14" fill="#000" font-weight="bold" textLength="70.3" lengthAdjust="spacingAndGlyphs" >Tot Power</text>
<rect x="937" y="425" width="66" height="28" fill="#d6d6d6" />
<rect x="937" y="425" width="65" height="1" fill="#dedede" />
<rect x="937" y="425" width="1" height="27" fill="#dedede" />
<rect x="938" y="426" width="63" height="2" fill="#9c9c9c" />
<rect x="938" y="426" width="2" height="25" fill="#9c9c9c" />
<rect x="938" y="426" width="63" height="1" fill="#747474" />
<rect x="938" y="426" width="1" height="25" fill="#747474" />
<rect x="938" y="450" width="63" height="2" fill="#f2f2f2" />
<rect x="1000" y="426" width="2" height="25" fill="#f2f2f2" />
<rect x="937" y="452" width="66" height="1" fill="#6e6e6e" />
<rect x="1002" y="425" width="1" height="28" fill="#6e6e6e" />
<text x="942.2" y="444.5" font-size="17" fill="#000" font-weight="bold" textLength="33.5" lengthAdjust="spacingAndGlyphs" >28.7</text>
<rect x="662" y="478" width="362" height="1" fill="#e8e8e8" />
<rect x="662" y="478" width="1" height="209" fill="#e8e8e8" />
<rect x="662" y="687" width="363" height="1" fill="#6a6a6a" />
<rect x="1024" y="478" width="1" height="210" fill="#6a6a6a" />
<rect x="664" y="480" width="358" height="1" fill="#6a6a6a" />
<rect x="664" y="480" width="1" height="205" fill="#6a6a6a" />
<rect x="664" y="685" width="359" height="1" fill="#e8e8e8" />
<rect x="1022" y="480" width="1" height="206" fill="#e8e8e8" />
<text x="681.8" y="504.6" font-size="12" fill="#000" font-weight="bold" textLength="119" lengthAdjust="spacingAndGlyphs" >Sampling Period (mS)</text>
<rect x="692" y="514" width="294" height="17" fill="#333333" />
<rect x="691" y="514" width="1" height="17" fill="#d0d0d0" />
<path d="M690 514 L684 522.5 L690 531 Z" fill="#8a8a8a" stroke="none" stroke-width="1" shape-rendering="geometricPrecision"/>
<path d="M988 514 L995 523 L988 532 Z" fill="#8a8a8a" stroke="none" stroke-width="1" shape-rendering="geometricPrecision"/>
<rect x="987" y="514" width="1" height="17" fill="#d0d0d0" />
<rect x="692" y="536" width="1" height="5" fill="#000" />
<rect x="713" y="537" width="1" height="3" fill="#000" />
<rect x="725" y="537" width="1" height="3" fill="#000" />
<rect x="733" y="537" width="1" height="3" fill="#000" />
<rect x="740" y="537" width="1" height="3" fill="#000" />
<rect x="745" y="537" width="1" height="3" fill="#000" />
<rect x="750" y="537" width="1" height="3" fill="#000" />
<rect x="754" y="537" width="1" height="3" fill="#000" />
<rect x="757" y="537" width="1" height="3" fill="#000" />
<rect x="760" y="536" width="1" height="5" fill="#000" />
<rect x="781" y="537" width="1" height="3" fill="#000" />
<rect x="793" y="537" width="1" height="3" fill="#000" />
<rect x="801" y="537" width="1" height="3" fill="#000" />
<rect x="808" y="537" width="1" height="3" fill="#000" />
<rect x="813" y="537" width="1" height="3" fill="#000" />
<rect x="818" y="537" width="1" height="3" fill="#000" />
<rect x="822" y="537" width="1" height="3" fill="#000" />
<rect x="825" y="537" width="1" height="3" fill="#000" />
<rect x="828" y="536" width="1" height="5" fill="#000" />
<rect x="849" y="537" width="1" height="3" fill="#000" />
<rect x="861" y="537" width="1" height="3" fill="#000" />
<rect x="869" y="537" width="1" height="3" fill="#000" />
<rect x="876" y="537" width="1" height="3" fill="#000" />
<rect x="881" y="537" width="1" height="3" fill="#000" />
<rect x="886" y="537" width="1" height="3" fill="#000" />
<rect x="889" y="537" width="1" height="3" fill="#000" />
<rect x="893" y="537" width="1" height="3" fill="#000" />
<rect x="896" y="536" width="1" height="5" fill="#000" />
<rect x="916" y="537" width="1" height="3" fill="#000" />
<rect x="928" y="537" width="1" height="3" fill="#000" />
<rect x="937" y="537" width="1" height="3" fill="#000" />
<rect x="943" y="537" width="1" height="3" fill="#000" />
<rect x="949" y="537" width="1" height="3" fill="#000" />
<rect x="953" y="537" width="1" height="3" fill="#000" />
<rect x="957" y="537" width="1" height="3" fill="#000" />
<rect x="961" y="537" width="1" height="3" fill="#000" />
<rect x="964" y="536" width="1" height="5" fill="#000" />
<rect x="984" y="536" width="1" height="5" fill="#000" />
<text x="693.0" y="552.5" font-size="12" fill="#000" font-weight="bold" text-anchor="middle" >0.1</text>
<text x="760.85" y="552.5" font-size="12" fill="#000" font-weight="bold" text-anchor="middle" >1</text>
<text x="828.7" y="552.5" font-size="12" fill="#000" font-weight="bold" text-anchor="middle" >10</text>
<text x="896.55" y="552.5" font-size="12" fill="#000" font-weight="bold" text-anchor="middle" >100</text>
<text x="984.8248852058011" y="552.5" font-size="12" fill="#000" font-weight="bold" text-anchor="middle" >2000</text>
<rect x="891" y="511" width="10" height="24" fill="#3d95e8" />
<rect x="891" y="511" width="1" height="24" fill="#2a6fb8" />
<rect x="900" y="511" width="1" height="24" fill="#2a6fb8" />
<rect x="895" y="511" width="1" height="24" fill="#b8dcff" />
<rect x="896" y="511" width="1" height="24" fill="#1f5fa0" />
<text x="689.4" y="588" font-size="12" fill="#000" font-weight="bold" textLength="28.5" lengthAdjust="spacingAndGlyphs" >Filter</text>
<rect x="679" y="594" width="57" height="26" fill="#000" />
<rect x="680" y="595" width="55" height="24" fill="#b4b4b4" />
<rect x="680" y="595" width="55" height="2" fill="#e8e8e8" />
<rect x="680" y="595" width="2" height="24" fill="#e8e8e8" />
<rect x="680" y="617" width="55" height="2" fill="#6a6a6a" />
<rect x="733" y="595" width="2" height="24" fill="#6a6a6a" />
<text x="706.5" y="612" font-size="12.5" fill="#000" font-weight="bold" textLength="21" lengthAdjust="spacingAndGlyphs" text-anchor="middle" >OFF</text>
<rect x="762" y="570" width="126" height="17" fill="#c8c8c8" />
<text x="763.4" y="582.5" font-size="12" fill="#7a7a7a" font-weight="bold" textLength="123" lengthAdjust="spacingAndGlyphs" >Cutoff Frequency (Hz)</text>
<rect x="753" y="595" width="7" height="21" fill="#c4c4c4" />
<path d="M759 597 L754 605.5 L759 614" fill="none" stroke="#8a8a8a" stroke-width="1" shape-rendering="geometricPrecision"/>
<rect x="762" y="596" width="226" height="18" fill="#8f8f8f" />
<rect x="762" y="596" width="1" height="18" fill="#7a7a7a" />
<rect x="759" y="614" width="230" height="7" fill="#acacac" />
<rect x="991" y="595" width="7" height="21" fill="#c4c4c4" />
<path d="M992 597 L997 605.5 L992 614" fill="none" stroke="#8a8a8a" stroke-width="1" shape-rendering="geometricPrecision"/>
<rect x="751" y="622" width="259" height="21" fill="#cfcfcf" />
<rect x="763" y="622" width="1" height="5" fill="#8a8a8a" />
<rect x="785" y="622" width="1" height="3" fill="#8a8a8a" />
<rect x="799" y="622" width="1" height="3" fill="#8a8a8a" />
<rect x="808" y="622" width="1" height="3" fill="#8a8a8a" />
<rect x="815" y="622" width="1" height="3" fill="#8a8a8a" />
<rect x="821" y="622" width="1" height="3" fill="#8a8a8a" />
<rect x="826" y="622" width="1" height="3" fill="#8a8a8a" />
<rect x="830" y="622" width="1" height="3" fill="#8a8a8a" />
<rect x="834" y="622" width="1" height="3" fill="#8a8a8a" />
<rect x="838" y="622" width="1" height="5" fill="#8a8a8a" />
<rect x="860" y="622" width="1" height="3" fill="#8a8a8a" />
<rect x="873" y="622" width="1" height="3" fill="#8a8a8a" />
<rect x="883" y="622" width="1" height="3" fill="#8a8a8a" />
<rect x="890" y="622" width="1" height="3" fill="#8a8a8a" />
<rect x="896" y="622" width="1" height="3" fill="#8a8a8a" />
<rect x="901" y="622" width="1" height="3" fill="#8a8a8a" />
<rect x="905" y="622" width="1" height="3" fill="#8a8a8a" />
<rect x="909" y="622" width="1" height="3" fill="#8a8a8a" />
<rect x="912" y="622" width="1" height="5" fill="#8a8a8a" />
<rect x="935" y="622" width="1" height="3" fill="#8a8a8a" />
<rect x="948" y="622" width="1" height="3" fill="#8a8a8a" />
<rect x="957" y="622" width="1" height="3" fill="#8a8a8a" />
<rect x="965" y="622" width="1" height="3" fill="#8a8a8a" />
<rect x="970" y="622" width="1" height="3" fill="#8a8a8a" />
<rect x="975" y="622" width="1" height="3" fill="#8a8a8a" />
<rect x="980" y="622" width="1" height="3" fill="#8a8a8a" />
<rect x="984" y="622" width="1" height="3" fill="#8a8a8a" />
<rect x="987" y="622" width="1" height="5" fill="#8a8a8a" />
<text x="763.4" y="638.4" font-size="12" fill="#808080" text-anchor="middle" >100</text>
<text x="838.1" y="638.4" font-size="12" fill="#808080" text-anchor="middle" >1000</text>
<text x="912.8" y="638.4" font-size="12" fill="#808080" text-anchor="middle" >10000</text>
<text x="987.5" y="638.4" font-size="12" fill="#808080" text-anchor="middle" >100000</text>
<rect x="867" y="614" width="13" height="8" fill="#b4b4b4" />
<path d="M867 589.5 L880 589.5 L879.5 596 L874.2 619 L872.8 619 L867.5 596 Z" fill="#8cc0f2" stroke="none" stroke-width="1" shape-rendering="geometricPrecision"/>
<rect x="873" y="614" width="1" height="9" fill="#8cc0f2" />
<rect x="9" y="692" width="1015" height="1" fill="#e8e8e8" />
<rect x="9" y="692" width="1" height="74" fill="#e8e8e8" />
<rect x="9" y="766" width="1016" height="1" fill="#6a6a6a" />
<rect x="1024" y="692" width="1" height="75" fill="#6a6a6a" />
<rect x="11" y="694" width="1011" height="1" fill="#6a6a6a" />
<rect x="11" y="694" width="1" height="70" fill="#6a6a6a" />
<rect x="11" y="764" width="1012" height="1" fill="#e8e8e8" />
<rect x="1022" y="694" width="1" height="71" fill="#e8e8e8" />
<rect x="127" y="705" width="79" height="41" fill="#000" />
<rect x="128" y="706" width="77" height="39" fill="#b4b4b4" />
<rect x="128" y="706" width="77" height="2" fill="#e8e8e8" />
<rect x="128" y="706" width="2" height="39" fill="#e8e8e8" />
<rect x="128" y="743" width="77" height="2" fill="#666666" />
<rect x="203" y="706" width="2" height="39" fill="#666666" />
<text x="166" y="730.9" font-size="13" fill="#ff0000" font-weight="bold" textLength="35" lengthAdjust="spacingAndGlyphs" text-anchor="middle" >Pause</text>
<rect x="244" y="705" width="81" height="41" fill="#7a7a7a" />
<rect x="245" y="706" width="79" height="39" fill="#d0d0d0" />
<rect x="245" y="706" width="79" height="2" fill="#f0f0f0" />
<rect x="245" y="706" width="2" height="39" fill="#f0f0f0" />
<rect x="245" y="743" width="79" height="2" fill="#a0a0a0" />
<rect x="322" y="706" width="2" height="39" fill="#a0a0a0" />
<text x="283" y="722.3" font-size="11.5" fill="#808080" font-weight="bold" textLength="24" lengthAdjust="spacingAndGlyphs" text-anchor="middle" >Save</text>
<text x="283" y="735.5" font-size="11.5" fill="#808080" font-weight="bold" textLength="25" lengthAdjust="spacingAndGlyphs" text-anchor="middle" >Data</text>
<rect x="363" y="707" width="6" height="23" fill="#c8c8c8" />
<path d="M368 709 L364 718.0 L368 728" fill="none" stroke="#8a8a8a" stroke-width="1" shape-rendering="geometricPrecision"/>
<rect x="369" y="708" width="183" height="20" fill="#8f8f8f" />
<rect x="369" y="728" width="183" height="5" fill="#acacac" />
<rect x="554" y="707" width="7" height="23" fill="#c8c8c8" />
<path d="M555 709 L560 718.0 L555 728" fill="none" stroke="#8a8a8a" stroke-width="1" shape-rendering="geometricPrecision"/>
<rect x="369" y="733" width="190" height="21" fill="#d0d0d0" />
<rect x="373" y="733" width="1" height="5" fill="#8a8a8a" />
<rect x="378" y="733" width="1" height="3" fill="#8a8a8a" />
<rect x="387" y="733" width="1" height="3" fill="#8a8a8a" />
<rect x="396" y="733" width="1" height="3" fill="#8a8a8a" />
<rect x="405" y="733" width="1" height="3" fill="#8a8a8a" />
<rect x="414" y="733" width="1" height="5" fill="#8a8a8a" />
<rect x="423" y="733" width="1" height="3" fill="#8a8a8a" />
<rect x="433" y="733" width="1" height="3" fill="#8a8a8a" />
<rect x="442" y="733" width="1" height="3" fill="#8a8a8a" />
<rect x="451" y="733" width="1" height="3" fill="#8a8a8a" />
<rect x="460" y="733" width="1" height="5" fill="#8a8a8a" />
<rect x="469" y="733" width="1" height="3" fill="#8a8a8a" />
<rect x="478" y="733" width="1" height="3" fill="#8a8a8a" />
<rect x="487" y="733" width="1" height="3" fill="#8a8a8a" />
<rect x="497" y="733" width="1" height="3" fill="#8a8a8a" />
<rect x="506" y="733" width="1" height="5" fill="#8a8a8a" />
<rect x="515" y="733" width="1" height="3" fill="#8a8a8a" />
<rect x="524" y="733" width="1" height="3" fill="#8a8a8a" />
<rect x="533" y="733" width="1" height="3" fill="#8a8a8a" />
<rect x="542" y="733" width="1" height="3" fill="#8a8a8a" />
<rect x="551" y="733" width="1" height="5" fill="#8a8a8a" />
<text x="373.6" y="749.6" font-size="12" fill="#808080" textLength="5.5" lengthAdjust="spacingAndGlyphs" text-anchor="middle" >1</text>
<text x="414.74615384615385" y="749.6" font-size="12" fill="#808080" textLength="10.9" lengthAdjust="spacingAndGlyphs" text-anchor="middle" >10</text>
<text x="460.4641025641026" y="749.6" font-size="12" fill="#808080" textLength="10.9" lengthAdjust="spacingAndGlyphs" text-anchor="middle" >20</text>
<text x="506.18205128205125" y="749.6" font-size="12" fill="#808080" textLength="10.9" lengthAdjust="spacingAndGlyphs" text-anchor="middle" >30</text>
<text x="551.9" y="749.6" font-size="12" fill="#808080" textLength="10.9" lengthAdjust="spacingAndGlyphs" text-anchor="middle" >40</text>
<rect x="369" y="705" width="8" height="27" fill="#a6cdf5" />
<rect x="369" y="705" width="1" height="27" fill="#7aa8d8" />
<rect x="376" y="705" width="1" height="27" fill="#7aa8d8" />
<rect x="372" y="705" width="1" height="27" fill="#e6f2ff" />
<rect x="373" y="705" width="1" height="27" fill="#6e9ccc" />
<rect x="571" y="708" width="34" height="15" fill="#c8c8c8" />
<text x="572" y="720" font-size="12" fill="#7a7a7a" font-weight="bold" textLength="31" lengthAdjust="spacingAndGlyphs" >Zoom</text>
<rect x="646" y="707" width="6" height="20" fill="#c8c8c8" />
<path d="M651 709 L647 716.5 L651 725" fill="none" stroke="#8a8a8a" stroke-width="1" shape-rendering="geometricPrecision"/>
<rect x="652" y="708" width="194" height="17" fill="#8f8f8f" />
<rect x="652" y="725" width="194" height="4" fill="#acacac" />
<rect x="848" y="707" width="7" height="20" fill="#c8c8c8" />
<path d="M849 709 L854 716.5 L849 725" fill="none" stroke="#8a8a8a" stroke-width="1" shape-rendering="geometricPrecision"/>
<rect x="652" y="730" width="197" height="21" fill="#d0d0d0" />
<rect x="656" y="730" width="1" height="5" fill="#8a8a8a" />
<rect x="665" y="730" width="1" height="3" fill="#8a8a8a" />
<rect x="675" y="730" width="1" height="3" fill="#8a8a8a" />
<rect x="684" y="730" width="1" height="3" fill="#8a8a8a" />
<rect x="694" y="730" width="1" height="5" fill="#8a8a8a" />
<rect x="703" y="730" width="1" height="3" fill="#8a8a8a" />
<rect x="712" y="730" width="1" height="3" fill="#8a8a8a" />
<rect x="722" y="730" width="1" height="3" fill="#8a8a8a" />
<rect x="731" y="730" width="1" height="5" fill="#8a8a8a" />
<rect x="741" y="730" width="1" height="3" fill="#8a8a8a" />
<rect x="750" y="730" width="1" height="3" fill="#8a8a8a" />
<rect x="759" y="730" width="1" height="3" fill="#8a8a8a" />
<rect x="769" y="730" width="1" height="5" fill="#8a8a8a" />
<rect x="778" y="730" width="1" height="3" fill="#8a8a8a" />
<rect x="788" y="730" width="1" height="3" fill="#8a8a8a" />
<rect x="797" y="730" width="1" height="3" fill="#8a8a8a" />
<rect x="807" y="730" width="1" height="5" fill="#8a8a8a" />
<rect x="816" y="730" width="1" height="3" fill="#8a8a8a" />
<rect x="825" y="730" width="1" height="3" fill="#8a8a8a" />
<rect x="835" y="730" width="1" height="3" fill="#8a8a8a" />
<rect x="844" y="730" width="1" height="5" fill="#8a8a8a" />
<text x="656.4" y="746.6" font-size="12" fill="#808080" textLength="5.5" lengthAdjust="spacingAndGlyphs" text-anchor="middle" >0</text>
<text x="694.06" y="746.6" font-size="12" fill="#808080" textLength="13.8" lengthAdjust="spacingAndGlyphs" text-anchor="middle" >0.2</text>
<text x="731.72" y="746.6" font-size="12" fill="#808080" textLength="13.8" lengthAdjust="spacingAndGlyphs" text-anchor="middle" >0.4</text>
<text x="769.38" y="746.6" font-size="12" fill="#808080" textLength="13.8" lengthAdjust="spacingAndGlyphs" text-anchor="middle" >0.6</text>
<text x="807.04" y="746.6" font-size="12" fill="#808080" textLength="13.8" lengthAdjust="spacingAndGlyphs" text-anchor="middle" >0.8</text>
<text x="844.7" y="746.6" font-size="12" fill="#808080" textLength="5.5" lengthAdjust="spacingAndGlyphs" text-anchor="middle" >1</text>
<rect x="652" y="705" width="8" height="24" fill="#a6cdf5" />
<rect x="652" y="705" width="1" height="24" fill="#7aa8d8" />
<rect x="659" y="705" width="1" height="24" fill="#7aa8d8" />
<rect x="655" y="705" width="1" height="24" fill="#e6f2ff" />
<rect x="656" y="705" width="1" height="24" fill="#6e9ccc" />
<rect x="860" y="708" width="46" height="15" fill="#c8c8c8" />
<text x="862" y="720" font-size="12" fill="#7a7a7a" font-weight="bold" textLength="42" lengthAdjust="spacingAndGlyphs" >Position</text>
</svg></body></html>
